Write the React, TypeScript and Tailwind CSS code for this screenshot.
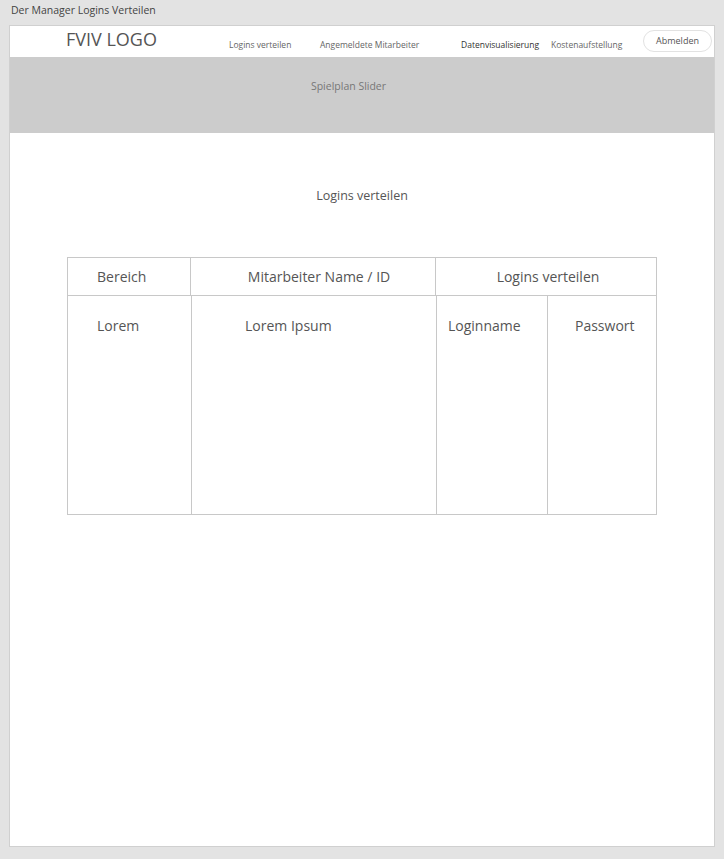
const FONT = { fontFamily: '"Open Sans", "Noto Sans", sans-serif' }

const NAV = [
  { label: 'Logins verteilen', cls: 'w-[91px] text-[#666]' },
  { label: 'Angemeldete Mitarbeiter', cls: 'w-[141px] text-[#666]' },
  { label: 'Datenvisualisierung', cls: 'w-[90px] text-[#333]' },
  { label: 'Kostenaufstellung', cls: 'w-[92px] text-[#666]' },
]

export default function App() {
  return (
    <div className="min-h-[859px] w-[724px] bg-[#e3e3e3]" style={FONT}>
      <div className="h-[25px] pl-[11px] pt-[3px] text-[10.5px] text-[#444]">Der Manager Logins Verteilen</div>

      <div className="mx-[9px] h-[822px] border border-[#d0d0d0] bg-white">
        {/* header */}
        <div className="flex h-[31px] items-start">
          <div className="w-[219px] shrink-0 pl-[56px] pt-[1px] text-[18px] leading-[24px] text-[#555]">FVIV LOGO</div>
          <nav className="flex shrink-0 pt-[13px] text-[8.5px] leading-[12px]">
            {NAV.map((n) => (
              <span key={n.label} className={n.cls}>
                {n.label}
              </span>
            ))}
          </nav>
          <button className="mt-[4px] h-[22px] w-[69px] shrink-0 rounded-full border border-[#e2e2e2] pb-[1px] text-[9px] text-[#555]">
            Abmelden
          </button>
        </div>

        {/* slider */}
        <div className="flex h-[76px] items-start justify-center bg-[#cccccc] pr-[27px] pt-[22px] text-[10.5px] text-[#777]">
          Spielplan Slider
        </div>

        <div className="pt-[54px] text-center text-[12.5px] text-[#555]">Logins verteilen</div>

        {/* table */}
        <div className="mx-[57px] mt-[51px] flex h-[258px] flex-col border border-[#c8c8c8] text-[14px] text-[#555]">
          <div className="flex h-[38px] border-b border-[#c8c8c8]">
            <div className="flex w-[123px] items-center border-r border-[#c8c8c8] pl-[29px]">Bereich</div>
            <div className="flex w-[245px] items-center justify-center border-r border-[#c8c8c8] pl-[12px]">
              Mitarbeiter Name / ID
            </div>
            <div className="flex flex-1 items-center justify-center pl-[4px]">Logins verteilen</div>
          </div>
          <div className="flex flex-1">
            <div className="w-[124px] border-r border-[#c8c8c8] pl-[29px] pt-[19px]">Lorem</div>
            <div className="w-[245px] border-r border-[#c8c8c8] pl-[53px] pt-[19px]">Lorem Ipsum</div>
            <div className="w-[111px] border-r border-[#c8c8c8] pl-[11px] pt-[19px]">Loginname</div>
            <div className="flex-1 pl-[27px] pt-[19px]">Passwort</div>
          </div>
        </div>
      </div>
    </div>
  )
}
